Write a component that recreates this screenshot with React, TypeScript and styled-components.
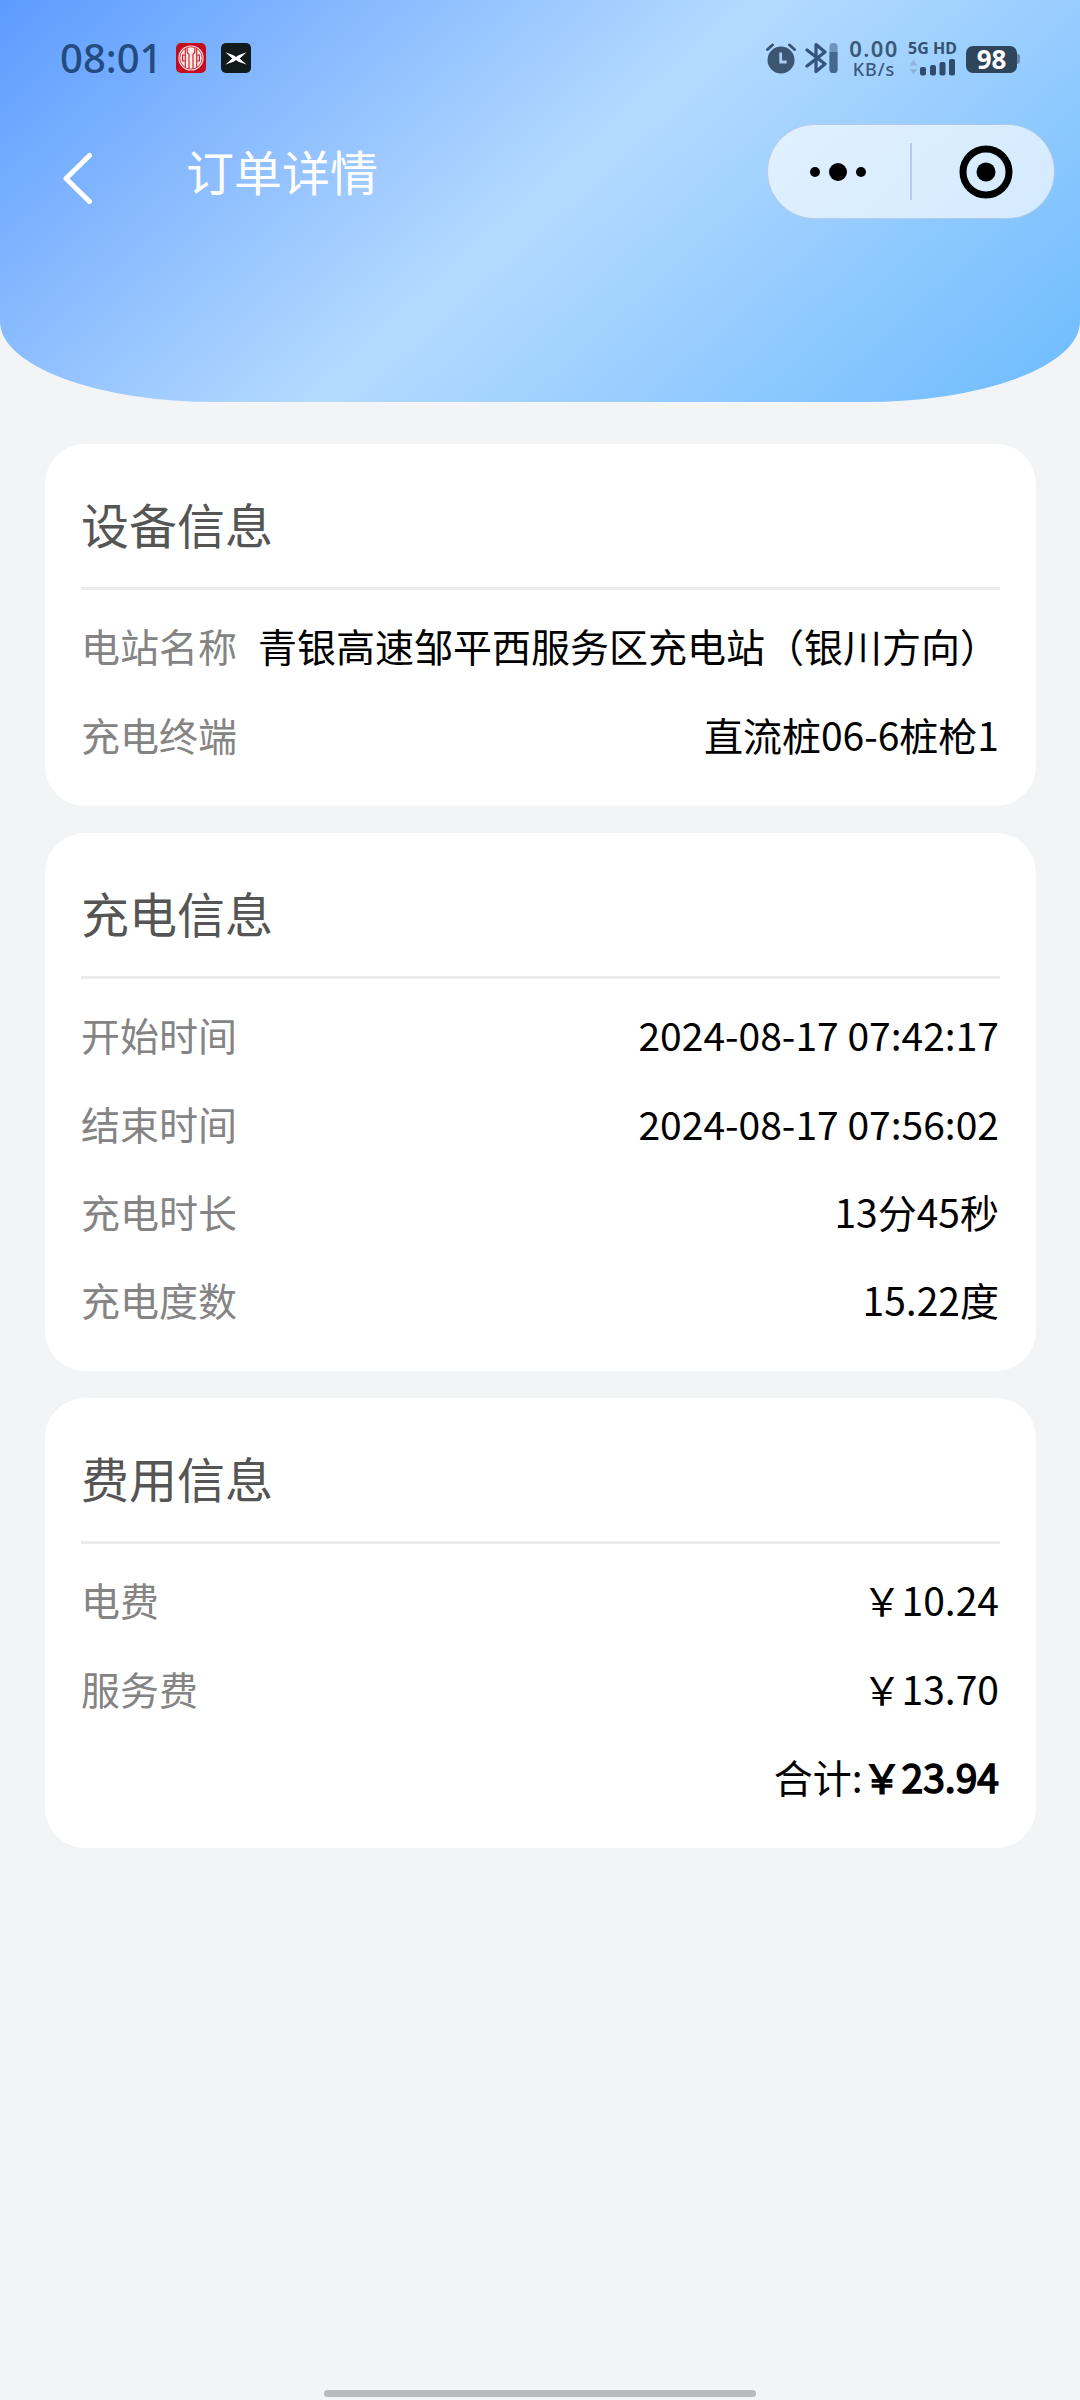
import React from "react";
import styled, { createGlobalStyle } from "styled-components";

const GlobalStyle = createGlobalStyle`
  * { box-sizing: border-box; }
  body {
    margin: 0;
    background: #f3f4f6;
    font-family: "Noto Sans CJK SC", sans-serif;
  }
`;

const Page = styled.div`
  width: 1080px;
  height: 2400px;
  display: flex;
  flex-direction: column;
  background: #f3f4f6;
  overflow: hidden;
`;

const Header = styled.header`
  height: 402px;
  flex: none;
  border-radius: 0 0 20% 20%;
  background: linear-gradient(138deg, #5c9bff 0%, #b5daff 50%, #6dbbff 100%);
`;

const StatusBar = styled.div`
  height: 116px;
  padding: 0 60px;
  display: flex;
  align-items: center;
  justify-content: space-between;
`;

const StatusGroup = styled.div`
  display: flex;
  align-items: center;
  height: 116px;
`;

const Clock = styled.span`
  width: 116px;
  font: 500 40px/40px "Noto Sans", sans-serif;
  color: #224c80;
`;

const AppBadge = styled.svg`
  width: 30px;
  height: 30px;
  margin-right: 15px;
`;

const Alarm = styled.svg`
  width: 30px;
  height: 31px;
  margin-right: 9px;
`;

const NetSpeed = styled.div`
  width: 54px;
  margin-left: 8px;
  margin-right: 1px;
  display: flex;
  flex-direction: column;
  align-items: center;
  gap: 3px;
  color: #3a5878;
  font-family: "Noto Sans", sans-serif;
`;

const SpeedValue = styled.span`
  font-weight: 600;
  font-size: 22px;
  line-height: 18px;
  letter-spacing: 1.4px;
`;

const SpeedUnit = styled.span`
  font-weight: 500;
  font-size: 18px;
  line-height: 18px;
  letter-spacing: 0.9px;
`;

const Network = styled.div`
  width: 49px;
  margin-left: 6px;
  display: flex;
  flex-direction: column;
  gap: 3px;
`;

const NetworkType = styled.span`
  font: 700 16px/14px "Noto Sans", sans-serif;
  color: #36526f;
  white-space: nowrap;
`;

const Battery = styled.div`
  display: flex;
  align-items: center;
  margin-left: 9px;
`;

const BatteryBody = styled.div`
  width: 51px;
  height: 27px;
  margin-top: 2px;
  border-radius: 7px;
  background: #2e455b;
  color: #fff;
  font: 700 26px/26px "Noto Sans", sans-serif;
  text-align: center;
`;

const BatteryTip = styled.div`
  width: 3px;
  height: 10px;
  margin-top: 2px;
  border-radius: 0 3px 3px 0;
  background: #6788aa;
`;

const NavBar = styled.nav`
  height: 112px;
  padding: 0 25px 0 61px;
  display: flex;
  align-items: center;
`;

const BackIcon = styled.svg`
  width: 32px;
  height: 52px;
  margin-top: 12px;
`;

const NavTitle = styled.h1`
  margin: 0 auto 5px 93px;
  color: #fff;
  font-weight: 400;
  font-size: 48px;
  line-height: 60px;
`;

const Capsule = styled.div`
  width: 288px;
  height: 95px;
  margin-bottom: 1px;
  border-radius: 48px;
  border: 1px solid rgba(120, 150, 190, 0.4);
  background: rgba(255, 255, 255, 0.65);
  display: flex;
  align-items: center;
`;

const CapsuleButton = styled.button<{ $padLeft?: number; $padRight?: number }>`
  flex: none;
  width: 142px;
  height: 93px;
  padding: 0 ${(p) => p.$padRight ?? 0}px 0 ${(p) => p.$padLeft ?? 0}px;
  border: 0;
  background: none;
  display: flex;
  align-items: center;
  justify-content: center;
`;

const CapsuleLine = styled.div`
  width: 2px;
  height: 57px;
  background: #b6cce6;
`;

const Cards = styled.main`
  padding: 42px 44px 0 45px;
  display: flex;
  flex-direction: column;
  gap: 27px;
`;

const Card = styled.section<{ $rows: number }>`
  height: ${(p) => 186 + p.$rows * 88}px;
  padding: 0 37px 0 36px;
  border-radius: 40px;
  background: #fff;
`;

const CardTitle = styled.h2`
  margin: 0;
  height: 146px;
  padding-top: 19px;
  margin-right: -1px;
  border-bottom: 3px solid #ebeced;
  color: #555;
  font-weight: 400;
  font-size: 48px;
  line-height: 120px;
`;

const Rows = styled.div`
  padding-top: 11px;
`;

const Row = styled.div<{ $end?: boolean }>`
  display: flex;
  align-items: center;
  justify-content: ${(p) => (p.$end ? "flex-end" : "space-between")};
  height: 88.4px;
  font-size: 39px;
  line-height: 88px;
  white-space: nowrap;
`;

const Label = styled.span`
  color: #848484;
`;

const Value = styled.span`
  color: #000;
`;

const Total = styled.span`
  color: #000;
  -webkit-text-stroke: 1.6px #000;
`;

const HomeIndicator = styled.div`
  width: 432px;
  height: 7px;
  margin: auto auto 3px;
  border-radius: 4px;
  background: #babbbd;
`;

const sections = [
  {
    title: "设备信息",
    rows: [
      ["电站名称", "青银高速邹平西服务区充电站（银川方向）"],
      ["充电终端", "直流桩06-6桩枪1"],
    ],
  },
  {
    title: "充电信息",
    rows: [
      ["开始时间", "2024-08-17 07:42:17"],
      ["结束时间", "2024-08-17 07:56:02"],
      ["充电时长", "13分45秒"],
      ["充电度数", "15.22度"],
    ],
  },
  {
    title: "费用信息",
    rows: [
      ["电费", "￥10.24"],
      ["服务费", "￥13.70"],
    ],
    total: "￥23.94",
  },
];

const BankBadge = () => (
  <AppBadge viewBox="0 0 30 30">
    <rect width="30" height="30" rx="5" fill="#c50d22" />
    <circle cx="15" cy="15" r="12.6" fill="#ffe9e4" />
    <circle cx="15" cy="15" r="11.2" fill="none" stroke="#c9283a" strokeWidth="0.9" />
    <g fill="none" stroke="#c9283a" strokeWidth="1.2">
      <path d="M11.2 5v4.5l1.8 1.8V26M18.8 5v4.5L17 11.3V26" />
      <path d="M9.3 5.5v19.5M20.7 5.5v19.5" />
      <path d="M8.8 12.2H6.6v5.6h2.2M21.2 12.2h2.2v5.6h-2.2" />
    </g>
  </AppBadge>
);

const CarBadge = () => (
  <AppBadge viewBox="0 0 30 30">
    <rect width="30" height="30" rx="5" fill="#131a1c" />
    <path
      d="M4.5 9.2 12.5 12.3 15 14l2.5-1.7 8-3.1-6.8 6.3 6.8 6-8-2.8L15 17l-2.5 1.7-8 2.8 6.8-6z"
      fill="#fff"
    />
  </AppBadge>
);

const AlarmIcon = () => (
  <Alarm viewBox="0 0 30 31">
    <circle cx="15" cy="17" r="13.5" fill="#3b5671" />
    <path d="M1.5 6.5 6.5 2M28.5 6.5 23.5 2" stroke="#3b5671" strokeWidth="3" strokeLinecap="round" />
    <path d="M14.7 9.5v9.5h6" fill="none" stroke="#a9cdf2" strokeWidth="2.8" />
  </Alarm>
);

const BluetoothIcon = () => (
  <svg width="34" height="32" viewBox="0 0 34 32">
    <path
      d="m2 8 18 14-9 7.5v-27l9 7.5L2 24"
      fill="none"
      stroke="#33557a"
      strokeWidth="3.2"
      strokeLinejoin="round"
      strokeLinecap="round"
    />
    <rect x="24.5" y="1" width="8" height="30" rx="3.5" fill="#6f95bd" />
    <path d="M24.5 10h8v17.5a3.5 3.5 0 0 1-3.5 3.5h-1a3.5 3.5 0 0 1-3.5-3.5z" fill="#45688d" />
  </svg>
);

const SignalIcon = () => (
  <svg width="48" height="18" viewBox="0 0 48 18">
    <path d="M1.5 7.5 5.5 2l4 5.5zM1.5 11h8l-4 5.5z" fill="#8fb6da" />
    <g fill="#2f4d6b">
      <rect x="12" y="9" width="6" height="8.5" rx="2" />
      <rect x="22" y="7" width="6" height="10.5" rx="2" />
      <rect x="31.5" y="4" width="6" height="13.5" rx="2" />
      <rect x="41" y="1" width="6" height="16.5" rx="2" />
    </g>
  </svg>
);

export default function App() {
  return (
    <>
      <GlobalStyle />
      <Page>
        <Header>
          <StatusBar>
            <StatusGroup>
              <Clock>08:01</Clock>
              <BankBadge />
              <CarBadge />
            </StatusGroup>
            <StatusGroup>
              <AlarmIcon />
              <BluetoothIcon />
              <NetSpeed>
                <SpeedValue>0.00</SpeedValue>
                <SpeedUnit>KB/s</SpeedUnit>
              </NetSpeed>
              <Network>
                <NetworkType>5G HD</NetworkType>
                <SignalIcon />
              </Network>
              <Battery>
                <BatteryBody>98</BatteryBody>
                <BatteryTip />
              </Battery>
            </StatusGroup>
          </StatusBar>
          <NavBar>
            <BackIcon viewBox="0 0 32 52">
              <path
                d="M28.5 3.5 5 26.5 28.5 49.5"
                fill="none"
                stroke="#fff"
                strokeWidth="5"
                strokeLinecap="round"
                strokeLinejoin="round"
              />
            </BackIcon>
            <NavTitle>订单详情</NavTitle>
            <Capsule>
              <CapsuleButton $padRight={2}>
                <svg width="58" height="20" viewBox="0 0 58 20">
                  <circle cx="6" cy="10" r="5" />
                  <circle cx="29" cy="10" r="9" />
                  <circle cx="52" cy="10" r="5" />
                </svg>
              </CapsuleButton>
              <CapsuleLine />
              <CapsuleButton $padLeft={5}>
                <svg width="54" height="54" viewBox="0 0 54 54">
                  <circle cx="27" cy="27" r="23" fill="none" stroke="#000" strokeWidth="7" />
                  <circle cx="27" cy="27" r="9.5" />
                </svg>
              </CapsuleButton>
            </Capsule>
          </NavBar>
        </Header>
        <Cards>
          {sections.map((section) => (
            <Card key={section.title} $rows={section.rows.length + (section.total ? 1 : 0)}>
              <CardTitle>{section.title}</CardTitle>
              <Rows>
                {section.rows.map(([label, value]) => (
                  <Row key={label}>
                    <Label>{label}</Label>
                    <Value>{value}</Value>
                  </Row>
                ))}
                {section.total && (
                  <Row $end>
                    <Value>合计:</Value>
                    <Total>{section.total}</Total>
                  </Row>
                )}
              </Rows>
            </Card>
          ))}
        </Cards>
        <HomeIndicator />
      </Page>
    </>
  );
}
